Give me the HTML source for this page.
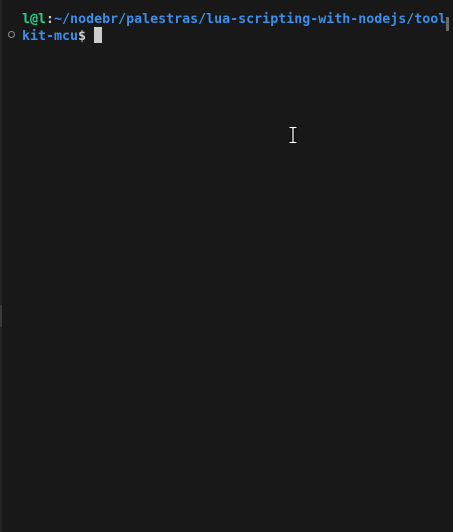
<!DOCTYPE html>
<html><head><style>
html,body{margin:0;padding:0;width:453px;height:532px;background:#181818;overflow:hidden}
body{position:relative;font-family:"DejaVu Sans Mono","Liberation Mono",monospace;font-size:13.3px;font-weight:bold}
.l{position:absolute;left:22px;white-space:pre;line-height:17px}
.g{color:#23d18b}.b{color:#3b8eea}.w{color:#cccccc}
</style></head><body>
<div style="position:absolute;left:0;top:0;width:2px;height:532px;background:#232323"></div>
<div style="position:absolute;left:0;top:305px;width:2px;height:22px;background:#3a3a3a"></div>
<div class="l" style="top:11px"><span class="g">l@l</span><span class="w">:</span><span class="b">~/nodebr/palestras/lua-scripting-with-nodejs/tool</span></div>
<div class="l" style="top:28px"><span class="b">kit-mcu</span><span class="w">$ </span></div>
<div style="position:absolute;left:94px;top:27px;width:8px;height:16px;background:#cccccc"></div>
<div style="position:absolute;left:8px;top:31px;width:5px;height:5px;border:1px solid #8a8a8a;border-radius:50%"></div>
<div style="position:absolute;left:446px;top:17px;width:3px;height:14px;background:#6a6a6a"></div>
<svg style="position:absolute;left:287px;top:126px" width="12" height="18" viewBox="0 0 12 18"><path d="M2 1.5h8M2 16.5h8M6 1.5v15" stroke="#000" stroke-width="3.5" fill="none"/><path d="M2.5 1.5h7M2.5 16.5h7M6 1.5v15" stroke="#fff" stroke-width="1.3" fill="none"/></svg>
</body></html>
